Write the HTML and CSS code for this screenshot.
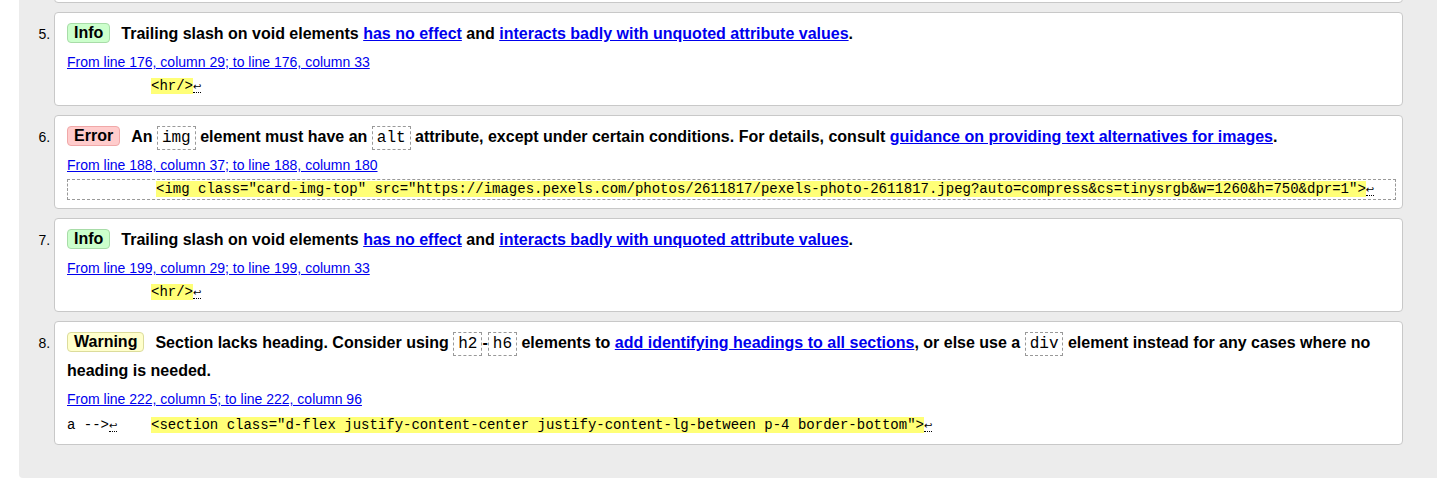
FILE: index.html
```html
<!DOCTYPE html>
<html lang="en">
<head>
<meta charset="utf-8">
<title>Validation results</title>
<link rel="stylesheet" href="styles.css">
</head>
<body>
<div class="panel">
  <ol class="messages" start="4">
    <li class="msg info partial"></li>
    <li class="msg info">
      <p class="text"><strong class="badge">Info</strong><span>Trailing slash on void elements <a href="#">has no effect</a> and <a href="#">interacts badly with unquoted attribute values</a>.</span></p>
      <p class="location"><a href="#">From line 176, column 29; to line 176, column 33</a></p>
      <p class="extract"><code>          <b>&lt;hr/&gt;</b><span class="lf">↩</span></code></p>
    </li>
    <li class="msg error">
      <p class="text"><strong class="badge">Error</strong><span>An <code class="ic">img</code> element must have an <code class="ic">alt</code> attribute, except under certain conditions. For details, consult <a href="#">guidance on providing text alternatives for images</a>.</span></p>
      <p class="location"><a href="#">From line 188, column 37; to line 188, column 180</a></p>
      <p class="extract"><code>          <b>&lt;img class="card-img-top" src="https://images.pexels.com/photos/2611817/pexels-photo-2611817.jpeg?auto=compress&amp;cs=tinysrgb&amp;w=1260&amp;h=750&amp;dpr=1"&gt;</b><span class="lf">↩</span></code></p>
    </li>
    <li class="msg info">
      <p class="text"><strong class="badge">Info</strong><span>Trailing slash on void elements <a href="#">has no effect</a> and <a href="#">interacts badly with unquoted attribute values</a>.</span></p>
      <p class="location"><a href="#">From line 199, column 29; to line 199, column 33</a></p>
      <p class="extract"><code>          <b>&lt;hr/&gt;</b><span class="lf">↩</span></code></p>
    </li>
    <li class="msg warning">
      <p class="text"><strong class="badge">Warning</strong><span>Section lacks heading. Consider using <code class="ic">h2</code>-<code class="ic">h6</code> elements to <a href="#">add identifying headings to all sections</a>, or else use a <code class="ic">div</code> element instead for any cases where no heading is needed.</span></p>
      <p class="location"><a href="#">From line 222, column 5; to line 222, column 96</a></p>
      <p class="extract"><code>a --&gt;<span class="lf">↩</span>    <b>&lt;section class="d-flex justify-content-center justify-content-lg-between p-4 border-bottom"&gt;</b><span class="lf">↩</span></code></p>
    </li>
  </ol>
</div>
</body>
</html>
```

FILE: styles.css
```css
html, body {
  margin: 0;
  padding: 0;
  background: #ffffff;
}

body {
  font-family: "Liberation Sans", Arial, Helvetica, sans-serif;
  color: #000;
  overflow: hidden;
}

.panel {
  margin-left: 19px;
  margin-top: -91px;
  padding: 0 34px 33px 0;
  background: #ececec;
  border-bottom-left-radius: 4px;
}

.messages {
  margin: 0;
  padding: 0 0 0 35px;
  list-style: decimal outside;
}

.msg {
  font-size: 14px;
  background: #fff;
  border: 1px solid #c8c8c8;
  border-radius: 4px;
  padding: 7px 6px 8px 12px;
  margin: 0 0 9px 0;
}

.msg:last-child {
  margin-bottom: 0;
}

.msg.partial {
  height: 77px;
  list-style: none;
}

.msg::marker {
  font-size: 14px;
}

.text {
  margin: 0;
  font-size: 16px;
  font-weight: bold;
  line-height: 28px;
}

.badge {
  display: inline-block;
  line-height: 18px;
  padding: 0 6px;
  border: 1px solid;
  border-radius: 4px;
  margin-right: 11px;
  vertical-align: 1px;
}

.info .badge {
  background: #ccffcc;
  border-color: #a8dca8;
}

.error .badge {
  background: #ffcccc;
  border-color: #f0a8a8;
}

.warning .badge {
  background: #ffffcc;
  border-color: #dcdc9c;
}

a {
  color: #0000ee;
  text-decoration: underline;
}

.ic {
  font-family: "Liberation Mono", "Courier New", monospace;
  font-size: 16px;
  font-weight: normal;
  padding: 2px 4px;
  border: 1px dashed #999;
  line-height: 18px;
}

.location {
  margin: 0;
  font-size: 14px;
  line-height: 28px;
}

.extract {
  margin: 0;
  height: 19px;
  border: 1px solid transparent;
  border-left: 0;
  border-right: 0;
  font-family: "Liberation Mono", "Courier New", monospace;
  font-size: 14px;
  line-height: 19px;
  white-space: pre;
}

.warning .extract {
  height: 21px;
  line-height: 22px;
}

.error .extract {
  border: 1px dashed #999;
  padding-left: 4px;
}

.extract code {
  font-family: "Liberation Mono", "Courier New", monospace;
  font-size: 14px;
  line-height: inherit;
}

.extract b {
  font-weight: normal;
  background: #ffff77;
}

.lf {
  font-family: "DejaVu Sans", sans-serif;
  font-size: 10px;
  line-height: 10px;
  border-bottom: 1px dotted #000;
}
```
